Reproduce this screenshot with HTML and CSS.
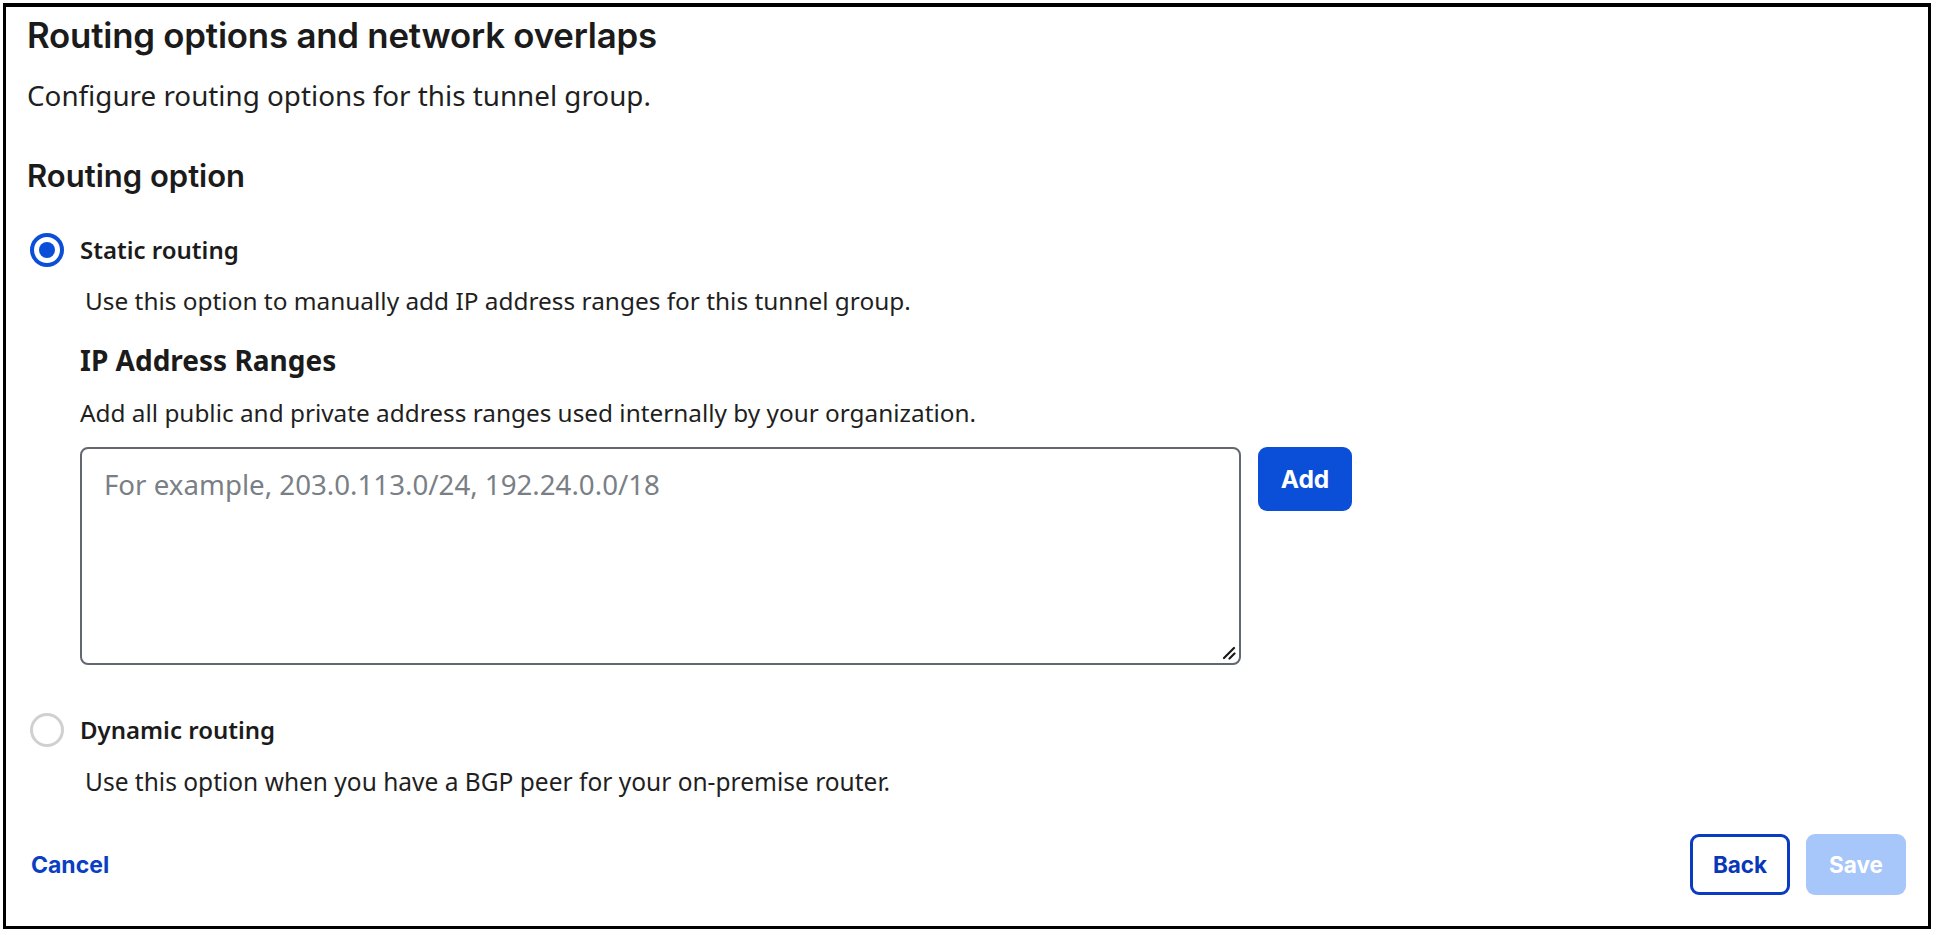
FILE: index.html
```html
<!DOCTYPE html>
<html lang="en">
<head>
<meta charset="utf-8">
<title>Routing options and network overlaps</title>
<link rel="stylesheet" href="styles.css">
</head>
<body>
<div class="frame">
  <h1 class="title">Routing options and network overlaps</h1>
  <p class="subtitle">Configure routing options for this tunnel group.</p>
  <h2 class="section-title">Routing option</h2>

  <label class="radio-row">
    <input type="radio" name="routing" class="radio-input" checked>
    <span class="radio radio-checked"><span class="radio-dot"></span></span>
    <span class="radio-label">Static routing</span>
  </label>
  <p class="option-desc">Use this option to manually add IP address ranges for this tunnel group.</p>

  <div class="ranges">
    <h3 class="ranges-title">IP Address Ranges</h3>
    <p class="ranges-desc">Add all public and private address ranges used internally by your organization.</p>
    <div class="ranges-row">
      <div class="input-wrap">
        <textarea class="ranges-input" placeholder="For example, 203.0.113.0/24, 192.24.0.0/18"></textarea>
        <svg class="grip" width="14" height="14" viewBox="0 0 14 14" aria-hidden="true">
          <path d="M2 12 L12 2 M7.5 12.5 L12.5 7.5" stroke="#1a1a1a" stroke-width="2.2" stroke-linecap="round" fill="none"/>
        </svg>
      </div>
      <button class="btn btn-add" type="button">Add</button>
    </div>
  </div>

  <label class="radio-row radio-row-second">
    <input type="radio" name="routing" class="radio-input">
    <span class="radio"></span>
    <span class="radio-label">Dynamic routing</span>
  </label>
  <p class="option-desc option-desc-second">Use this option when you have a BGP peer for your on-premise router.</p>

  <div class="footer">
    <a class="cancel" href="#">Cancel</a>
    <div class="footer-actions">
      <button class="btn btn-back" type="button">Back</button>
      <button class="btn btn-save" type="button" disabled>Save</button>
    </div>
  </div>
</div>
</body>
</html>
```

FILE: styles.css
```css
html, body {
  margin: 0;
  padding: 0;
  background: #ffffff;
}

body {
  font-family: "Noto Sans", "Open Sans", Arial, sans-serif;
  color: #1a1a1a;
}

.frame {
  box-sizing: border-box;
  width: 1928px;
  height: 926px;
  margin: 3px 0 0 3px;
  border: 3px solid #000;
  border-top-width: 4px;
  padding: 8px 22px 0 21px;
  display: flex;
  flex-direction: column;
}

.title {
  margin: 0;
  font-family: Inter, "Noto Sans", sans-serif;
  font-weight: 600;
  font-size: 34.8px;
  line-height: 40px;
  color: #1b1b1b;
  letter-spacing: -0.2px;
}

.subtitle {
  margin: 22px 0 0;
  font-size: 27.8px;
  line-height: 36px;
  color: #1f1f1f;
}

.section-title {
  margin: 43px 0 0;
  font-family: Inter, "Noto Sans", sans-serif;
  font-weight: 600;
  font-size: 31px;
  line-height: 40px;
  color: #1b1b1b;
}

.radio-row {
  margin-top: 36px;
  display: flex;
  align-items: center;
  height: 36px;
  cursor: pointer;
}

.radio-row-second {
  margin-top: 47px;
}

.radio-input {
  display: none;
}

.radio {
  box-sizing: border-box;
  width: 34px;
  height: 34px;
  margin-left: 3px;
  border-radius: 50%;
  border: 3px solid #d0d0d0;
  background: #fff;
  display: flex;
  align-items: center;
  justify-content: center;
  flex: none;
}

.radio-checked {
  border: 4px solid #0b4fd8;
}

.radio-dot {
  width: 16px;
  height: 16px;
  border-radius: 50%;
  background: #0b4fd8;
}

.radio-label {
  margin-left: 16px;
  font-size: 24px;
  font-weight: 600;
  line-height: 36px;
  color: #1b1b1b;
}

.option-desc {
  margin: 17px 0 0 58px;
  font-size: 24.4px;
  line-height: 32px;
  color: #1f1f1f;
}

.option-desc-second {
  margin-top: 18px;
  font-size: 24.5px;
}

.ranges {
  margin-left: 53px;
}

.ranges-title {
  margin: 24px 0 0;
  font-size: 28px;
  font-weight: 700;
  line-height: 38px;
  color: #1b1b1b;
}

.ranges-desc {
  margin: 18px 0 0;
  font-size: 24.35px;
  line-height: 32px;
  color: #1f1f1f;
}

.ranges-row {
  margin-top: 18px;
  display: flex;
  align-items: flex-start;
  gap: 17px;
}

.input-wrap {
  position: relative;
  width: 1161px;
  height: 218px;
}

.ranges-input {
  box-sizing: border-box;
  display: block;
  width: 1161px;
  height: 218px;
  border: 2.5px solid #626770;
  border-radius: 8px;
  padding: 17px 20px 17px 22px;
  font-family: "Noto Sans", "Open Sans", sans-serif;
  font-size: 27.7px;
  line-height: 36px;
  color: #1f1f1f;
  resize: none;
  outline: none;
  margin: 0;
}

.ranges-input::placeholder {
  color: #7a7f86;
}

.grip {
  position: absolute;
  right: 5px;
  bottom: 5px;
}

.btn {
  box-sizing: border-box;
  font-family: Inter, "Noto Sans", sans-serif;
  font-weight: 700;
  font-size: 22.5px;
  border-radius: 9px;
  cursor: pointer;
  padding: 0;
}

.btn-add {
  width: 94px;
  height: 64px;
  background: #0b4fd8;
  color: #fff;
  border: none;
  font-size: 24.5px;
}

.footer {
  margin-top: 36px;
  display: flex;
  align-items: center;
  justify-content: space-between;
}

.cancel {
  margin-left: 4px;
  font-family: Inter, "Noto Sans", sans-serif;
  font-weight: 700;
  font-size: 23px;
  line-height: 30px;
  color: #0a3fc4;
  text-decoration: none;
}

.footer-actions {
  display: flex;
  gap: 16px;
}

.btn-back {
  width: 100px;
  height: 61px;
  background: #fff;
  color: #0a37b8;
  border: 3px solid #0a3bc0;
}

.btn-save {
  width: 100px;
  height: 61px;
  background: #a7c6fa;
  color: #fff;
  border: none;
  cursor: default;
}
```
